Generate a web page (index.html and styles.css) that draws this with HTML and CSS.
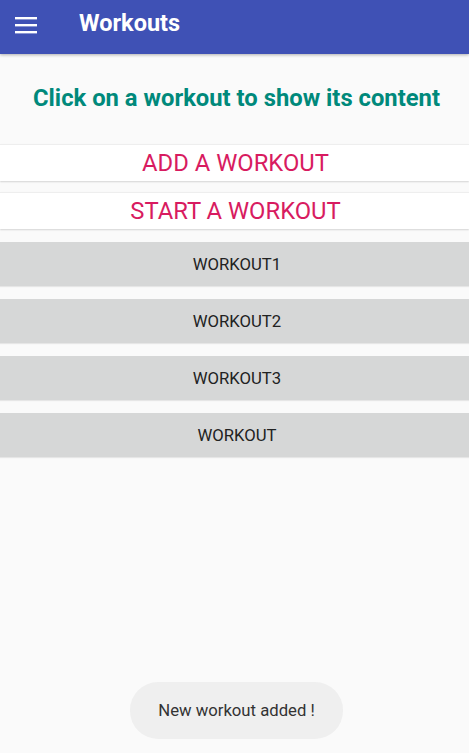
FILE: index.html
```html
<!DOCTYPE html>
<html>
<head>
<meta charset="utf-8">
<link rel="stylesheet" href="styles.css">
</head>
<body>
<header class="appbar">
  <svg class="menu" width="24" height="24" viewBox="0 0 24 24"><rect x="1" y="3" width="22" height="2.4" fill="#fff"/><rect x="1" y="10" width="22" height="2.4" fill="#fff"/><rect x="1" y="17" width="22" height="2.4" fill="#fff"/></svg>
  <h1 class="title">Workouts</h1>
</header>
<main class="content">
  <p class="hint">Click on a workout to show its content</p>
  <button class="action">ADD A WORKOUT</button>
  <button class="action">START A WORKOUT</button>
  <ul class="list">
    <li class="item">WORKOUT1</li>
    <li class="item">WORKOUT2</li>
    <li class="item">WORKOUT3</li>
    <li class="item">WORKOUT</li>
  </ul>
</main>
<div class="toast">New workout added !</div>
</body>
</html>
```
FILE: styles.css
```css
html, body {
  margin: 0;
  padding: 0;
  height: 100%;
}
body {
  background: #fafafa;
  font-family: Roboto, "Liberation Sans", sans-serif;
  overflow: hidden;
}
.appbar {
  height: 54px;
  background: #3f51b5;
  display: flex;
  align-items: center;
  box-shadow: 0 1px 3px rgba(0,0,0,0.3);
  position: relative;
}
.menu {
  margin-left: 14px;
  margin-top: -2px;
}
.title {
  margin: 0 0 0 41px;
  color: #fff;
  font-size: 23.5px;
  font-weight: 700;
  margin-top: -8px;
}
.content {
  display: flex;
  flex-direction: column;
}
.hint {
  margin: 0;
  height: 90px;
  display: flex;
  align-items: center;
  justify-content: center;
  color: #00897b;
  font-size: 23.8px;
  font-weight: 700;
  padding-bottom: 2px;
  padding-left: 4px;
  box-sizing: border-box;
}
.action {
  border: none;
  background: #fff;
  color: #d81b60;
  font-family: Roboto, "Liberation Sans", sans-serif;
  font-size: 23.8px;
  height: 37px;
  padding: 0 0 0 2px;
  margin: 0 0 11px 0;
  border-top: 1px solid #eeeeee;
  box-shadow: 0 1px 1.5px rgba(0,0,0,0.15);
}
.list {
  list-style: none;
  margin: 2px 0 0 0;
  padding: 0;
  display: flex;
  flex-direction: column;
  gap: 13px;
}
.item {
  height: 44px;
  background: #d6d7d7;
  display: flex;
  align-items: center;
  justify-content: center;
  font-size: 16.7px;
  font-weight: 400;
  color: #222;
  padding-left: 5px;
  box-shadow: 0 1px 1px rgba(0,0,0,0.08);
}
.toast {
  position: absolute;
  left: 130px;
  top: 682px;
  width: 213px;
  height: 57px;
  border-radius: 28px;
  background: #efefef;
  display: flex;
  align-items: center;
  justify-content: center;
  font-size: 16.7px;
  color: #333;
}
```
